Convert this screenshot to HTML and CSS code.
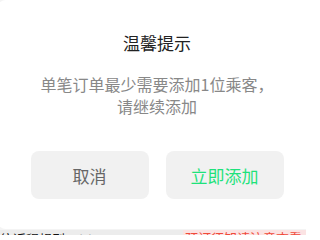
FILE: index.html
```html
<!DOCTYPE html>
<html lang="zh-CN">
<head>
<meta charset="utf-8">
<link rel="stylesheet" href="styles.css">
</head>
<body>
<div class="page">
  <div class="dialog">
    <div class="title">温馨提示</div>
    <div class="msg">单笔订单最少需要添加1位乘客，请继续添加</div>
    <div class="actions">
      <div class="btn cancel">取消</div>
      <div class="btn ok">立即添加</div>
    </div>
  </div>
  <div class="strip">
    <div class="strip-left"><span class="dark">往返程规则</span><span class="arrow">∨</span></div>
    <div class="strip-right">预订须知请注意查看</div>
  </div>
</div>
</body>
</html>
```
FILE: styles.css
```css
html, body {
  margin: 0;
  padding: 0;
  background: #fff;
}
.page {
  width: 306px;
  height: 235px;
  overflow: hidden;
  background: #f4f4f4;
  font-family: "Noto Sans CJK SC", "Noto Sans", sans-serif;
}
.dialog {
  margin-left: -3px;
  width: 309px;
  height: 229px;
  box-sizing: border-box;
  background: #fff;
  border-radius: 9px 0 0 9px;
  padding-top: 31px;
  padding-left: 11px;
  display: flex;
  flex-direction: column;
  align-items: center;
}
.title {
  font-size: 17px;
  line-height: 24px;
  color: #222;
}
.msg {
  margin-top: 18px;
  width: 240px;
  font-size: 16px;
  line-height: 22px;
  color: #888;
  text-align: center;
}
.actions {
  margin-top: 34px;
  display: flex;
  gap: 17px;
}
.btn {
  width: 118px;
  height: 48px;
  border-radius: 8px;
  background: #f1f1f1;
  display: flex;
  align-items: center;
  justify-content: center;
  font-size: 17px;
}
.cancel { color: #666; }
.ok { color: #1ee27b; }
.strip {
  margin-top: 1px;
  display: flex;
  height: 5px;
  overflow: hidden;
  font-size: 13px;
  line-height: 16px;
}
.strip-left {
  width: 183px;
  background: #ececec;
  display: flex;
  align-items: flex-start;
}
.strip-left .dark {
  color: #111;
  margin-top: 1px;
}
.strip-left .arrow {
  color: #aaa;
  margin-left: 14px;
}
.strip-right {
  flex: 1;
  overflow: hidden;
  background: #fbe3e3;
  color: #f04a3a;
  padding-left: 2px;
  white-space: nowrap;
}
```
